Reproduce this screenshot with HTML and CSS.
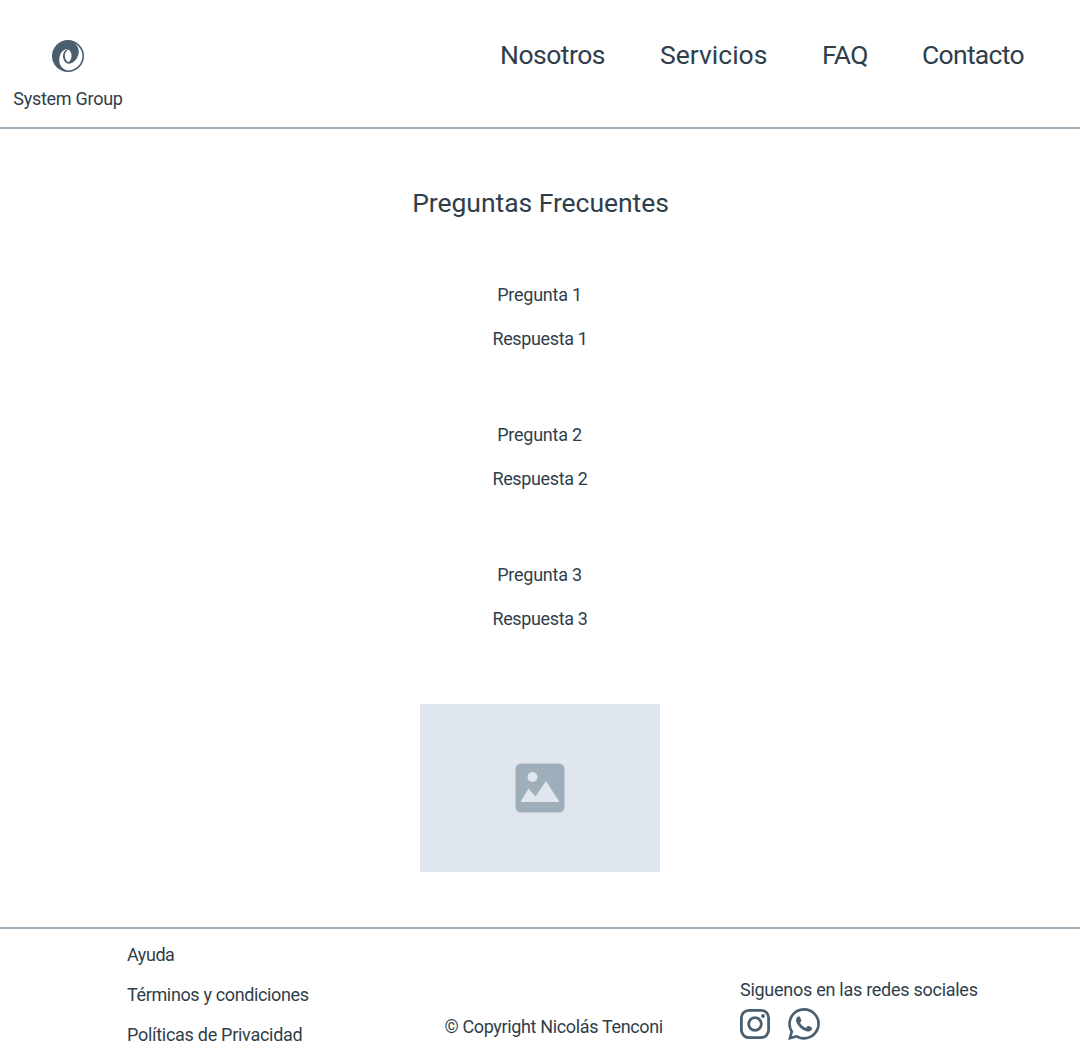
FILE: index.html
```html
<!DOCTYPE html>
<html lang="es">
<head>
<meta charset="utf-8">
<title>System Group - Preguntas Frecuentes</title>
<link rel="stylesheet" href="styles.css">
</head>
<body>
<header class="header">
  <a class="brand">
    <svg class="brand-icon" viewBox="0 0 32 32" aria-hidden="true">
      <circle cx="16" cy="16" r="16" fill="#4b5e6e"/>
      <path d="M22.600 3.200A14.400 14.400 0 0 1 16 30.400C10.500 29.500 7 25 7.300 19.500C7.600 13.500 10.500 9.500 15.500 9C12.300 10.500 10.600 13.500 11 17C11.400 20.500 13.500 23 16.200 23.800C22 23.500 26.500 18 26.800 12C27 8.500 25.300 5.500 22.600 3.200Z" fill="#fff"/>
      <path d="M16.300 9.600C18.500 11 19.700 13.500 19.500 16.300C19.300 19 18.200 21.200 16.300 22.300C14.200 20.800 12.800 18.500 12.800 15.800C12.800 13.200 14.200 11 16.300 9.600Z" fill="#fff"/>
    </svg>
    <span class="brand-name">System Group</span>
  </a>
  <nav class="nav">
    <a class="nav-link nosotros">Nosotros</a>
    <a class="nav-link servicios">Servicios</a>
    <a class="nav-link faq-link">FAQ</a>
    <a class="nav-link contacto">Contacto</a>
  </nav>
</header>
<main class="main">
  <h1 class="title">Preguntas Frecuentes</h1>
  <section class="faq">
    <div class="faq-item"><h2 class="question">Pregunta 1</h2><p class="answer">Respuesta 1</p></div>
    <div class="faq-item"><h2 class="question">Pregunta 2</h2><p class="answer">Respuesta 2</p></div>
    <div class="faq-item"><h2 class="question">Pregunta 3</h2><p class="answer">Respuesta 3</p></div>
  </section>
  <div class="picture">
    <svg class="picture-icon" viewBox="0 0 50 50" aria-hidden="true">
      <rect x=".5" y=".5" width="49" height="49" rx="5.500" fill="#9eaebb"/>
      <circle cx="17.500" cy="14" r="5" fill="#dfe6ee"/>
      <path d="M5.500 39L13.500 25.500L20.500 33.500L31 18L44.500 39Z" fill="#dfe6ee"/>
    </svg>
  </div>
</main>
<footer class="footer">
  <div class="links">
    <a class="ayuda">Ayuda</a>
    <a class="terminos">Términos y condiciones</a>
    <a class="politicas">Políticas de Privacidad</a>
  </div>
  <p class="copyright">© Copyright Nicolás Tenconi</p>
  <div class="social">
    <span class="social-title">Siguenos en las redes sociales</span>
    <div class="social-icons">
      <svg class="instagram" viewBox="0 0 30 30" aria-hidden="true">
        <rect x="1.400" y="1.400" width="27.200" height="27.200" rx="7.500" fill="none" stroke="#4b5e6e" stroke-width="2.800"/>
        <circle cx="15" cy="15" r="6.300" fill="none" stroke="#4b5e6e" stroke-width="2.800"/>
        <circle cx="23" cy="7" r="1.900" fill="#4b5e6e"/>
      </svg>
      <svg class="whatsapp" viewBox="0 0 24 24" aria-hidden="true">
        <path fill="#4b5e6e" d="M17.472 14.382c-.297-.149-1.758-.867-2.030-.967-.273-.099-.471-.148-.670.150-.197.297-.767.966-.940 1.164-.173.199-.347.223-.644.075-.297-.150-1.255-.463-2.390-1.475-.883-.788-1.480-1.761-1.653-2.059-.173-.297-.018-.458.130-.606.134-.133.298-.347.446-.520.149-.174.198-.298.298-.497.099-.198.050-.371-.025-.520-.075-.149-.669-1.612-.916-2.207-.242-.579-.487-.500-.669-.510-.173-.008-.371-.010-.570-.010-.198 0-.520.074-.792.372-.272.297-1.040 1.016-1.040 2.479 0 1.462 1.065 2.875 1.213 3.074.149.198 2.096 3.200 5.077 4.487.709.306 1.262.489 1.694.625.712.227 1.360.195 1.871.118.571-.085 1.758-.719 2.006-1.413.248-.694.248-1.289.173-1.413-.074-.124-.272-.198-.570-.347m-5.421 7.403h-.004a9.870 9.870 0 01-5.031-1.378l-.361-.214-3.741.982.998-3.648-.235-.374a9.860 9.860 0 01-1.510-5.260c.001-5.450 4.436-9.884 9.888-9.884 2.640 0 5.122 1.030 6.988 2.898a9.825 9.825 0 012.893 6.994c-.003 5.450-4.437 9.884-9.885 9.884m8.413-18.297A11.815 11.815 0 0012.050 0C5.495 0 .160 5.335.157 11.892c0 2.096.547 4.142 1.588 5.945L.057 24l6.305-1.654a11.882 11.882 0 005.683 1.448h.005c6.554 0 11.890-5.335 11.893-11.893a11.821 11.821 0 00-3.480-8.413z"/>
      </svg>
    </div>
  </div>
</footer>
</body>
</html>
```
FILE: styles.css
```css
* { box-sizing: border-box; margin: 0; padding: 0; }
body {
  width: 1080px;
  height: 1064px;
  display: flex;
  flex-direction: column;
  background: #fff;
  color: #2f3e4b;
  font: 400 18px/20px Roboto, "Liberation Sans", sans-serif;
  white-space: nowrap;
  overflow: hidden;
}
.header {
  height: 129px;
  display: flex;
  justify-content: space-between;
  align-items: flex-start;
  padding: 39px 56px 0 13px;
  border-bottom: 2px solid #9eaebb;
}
.brand { width: 110px; display: flex; flex-direction: column; align-items: center; gap: 17px; padding-top: 1px; }
.brand-icon { width: 32px; height: 32px; }
.brand-name { letter-spacing: -.27px; }
.nav { display: grid; grid-template-columns: 160px 162px 100px 102px; }
.nav-link, .title { font-size: 26.500px; line-height: 32px; font-weight: 400; }
.nosotros { letter-spacing: -.5px; }
.servicios { letter-spacing: 0; }
.faq-link { letter-spacing: -.7px; }
.contacto { letter-spacing: -.7px; }
.main { height: 798px; display: flex; flex-direction: column; align-items: center; padding-top: 58px; }
.title { letter-spacing: -.05px; padding-left: 1px; }
.faq { display: flex; flex-direction: column; gap: 76px; margin-top: 66px; text-align: center; }
.faq-item { display: flex; flex-direction: column; align-items: center; gap: 24px; }
.question { font-size: 18px; font-weight: 400; letter-spacing: -.25px; padding-right: 1px; }
.answer { letter-spacing: -.36px; }
.picture { width: 240px; height: 168px; margin-top: 75px; display: flex; align-items: center; justify-content: center; background: #dfe6ee; }
.picture-icon { width: 50px; height: 50px; }
.footer {
  flex: 1;
  display: grid;
  grid-template-columns: 317.500px 295.500px 1fr;
  align-items: start;
  padding-left: 127px;
  border-top: 2px solid #9eaebb;
}
.links { display: flex; flex-direction: column; gap: 20px; padding-top: 16px; }
.ayuda { letter-spacing: -.45px; }
.terminos { letter-spacing: -.36px; }
.politicas { letter-spacing: -.28px; }
.copyright { padding-top: 88px; letter-spacing: -.35px; }
.social { padding-top: 51px; }
.social-title { letter-spacing: -.27px; }
.social-icons { display: flex; align-items: center; gap: 18px; margin-top: 8px; }
.instagram { width: 30px; height: 30px; }
.whatsapp { width: 32px; height: 32px; }
```
